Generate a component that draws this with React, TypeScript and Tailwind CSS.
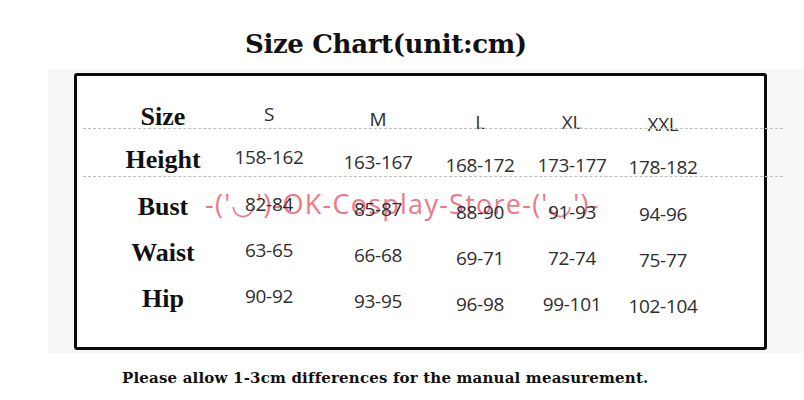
import React from "react";

const sizes = ["S", "M", "L", "XL", "XXL"];

const rows = [
  { label: "Height", values: ["158-162", "163-167", "168-172", "173-177", "178-182"] },
  { label: "Bust", values: ["82-84", "85-87", "88-90", "91-93", "94-96"] },
  { label: "Waist", values: ["63-65", "66-68", "69-71", "72-74", "75-77"] },
  { label: "Hip", values: ["90-92", "93-95", "96-98", "99-101", "102-104"] },
];

// the chart is a photo, so every column sits a bit lower than the last one
const colNudge = ["pb-[6px]", "pt-[3px]", "pt-[9px]", "pt-[10px]", "pt-[14px]"];

const serif = "font-['DejaVu_Serif',serif]";
const sans = "font-['Open_Sans','DejaVu_Sans',sans-serif]";

const Row = ({ label, values, className }: { label: string; values: string[]; className: string }) => {
  return (
    <div
      className={`relative grid grid-cols-[106px_106px_112px_92px_92px_90px] grid-rows-[minmax(0,1fr)] pl-[33px] ${className}`}
    >
      <div className="flex items-center justify-center font-['Liberation_Serif',serif] text-[26px] leading-[28px] font-bold text-[#111]">
        {label}
      </div>
      {values.map((v, i) => (
        <div
          key={i}
          className={`flex items-center justify-center ${sans} text-[19px] leading-[24px] tracking-[-0.3px] text-[#2e2e2e] ${colNudge[i]}`}
        >
          {v}
        </div>
      ))}
    </div>
  );
};

const Dashed = () => (
  <div className="relative ml-[6px] -mr-[19px] h-0 border-t border-dashed border-[#bdbdbd]" />
);

export default function App() {
  return (
    <div className="w-[804px] h-[400px] bg-white overflow-hidden">
      <h1
        className={`pl-[245px] pt-[29px] ${serif} text-[26px] leading-[30px] tracking-[-0.35px] font-bold text-[#111]`}
      >
        Size Chart(unit:cm)
      </h1>

      <div className="mt-[10px] ml-[48px] h-[284px] bg-[#f7f7f7] pl-[26px] pt-[4px]">
        <div className="relative w-[693px] h-[277px] rounded-[3px] border-[3px] border-[#0a0a0a] bg-white">
          <div
            className={`absolute left-[128px] top-[114px] ${sans} text-[27px] leading-none tracking-[1.25px] whitespace-nowrap text-[#ec6b7b] opacity-90`}
          >
            -('◡')-OK-Cosplay-Store-('◡')-
          </div>

          <div className="pt-[24px]">
            <Row label="Size" values={sizes} className="h-[28px] pt-[6px]" />
            <Dashed />
            <Row label={rows[0].label} values={rows[0].values} className="h-[47px] pt-[15px]" />
            <Dashed />
            <div className="mt-[7px]">
              {rows.slice(1).map((r) => (
                <Row key={r.label} label={r.label} values={r.values} className="h-[46px]" />
              ))}
            </div>
          </div>
        </div>
      </div>

      <p className={`mt-[14px] pl-[122px] ${serif} text-[15px] tracking-[0.18px] font-bold text-[#111]`}>
        Please allow 1-3cm differences for the manual measurement.
      </p>
    </div>
  );
}
